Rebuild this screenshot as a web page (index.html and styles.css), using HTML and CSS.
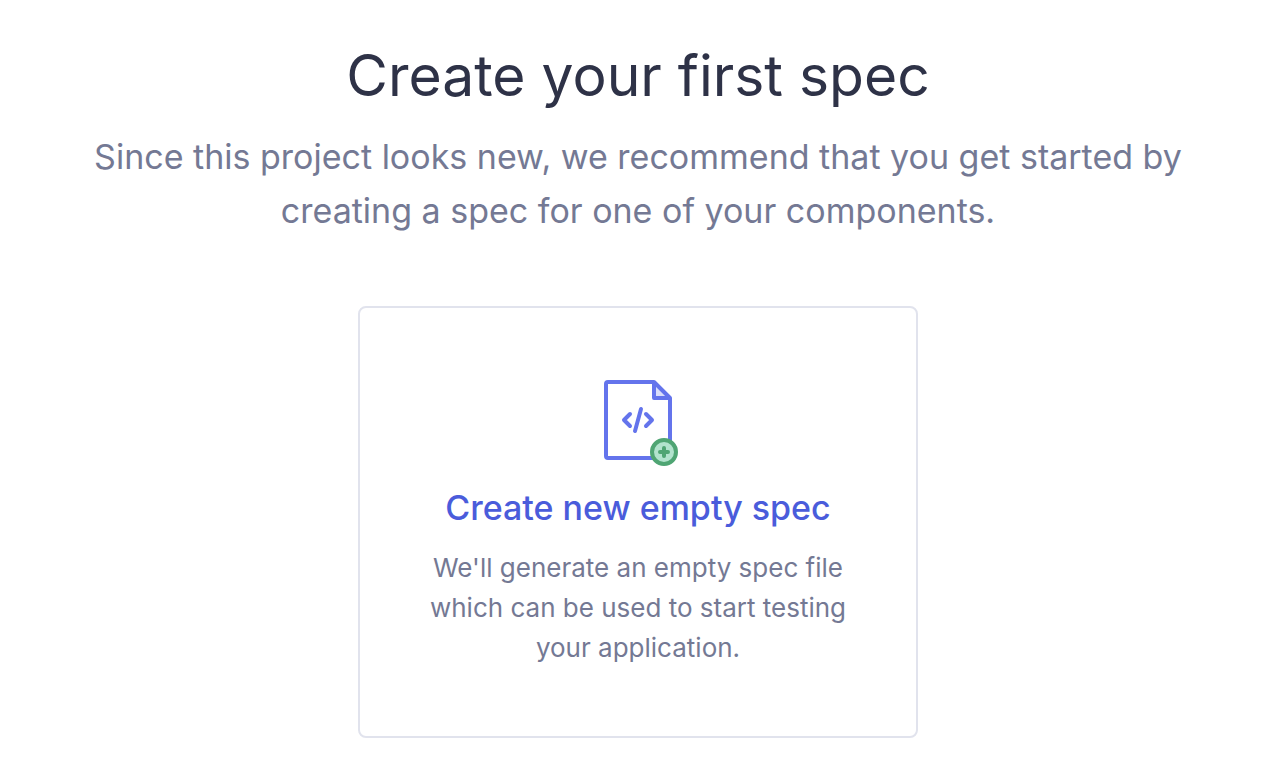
FILE: index.html
```html
<!DOCTYPE html>
<html lang="en">
<head>
<meta charset="utf-8">
<meta name="viewport" content="width=device-width, initial-scale=1">
<title>Create your first spec</title>
<link rel="stylesheet" href="styles.css">
</head>
<body>
<main class="page">
  <h1 class="title">Create your first spec</h1>
  <p class="intro">Since this project looks new, we recommend that you get started by creating a spec for one of your components.</p>
  <button class="card" type="button">
    <svg class="card-icon" viewBox="-2 0 80 88" aria-hidden="true">
      <path d="M54 4v16h16z" fill="#dadefa"/>
      <path d="M54 4H8a2 2 0 0 0-2 2v72a2 2 0 0 0 2 2h60a2 2 0 0 0 2-2V20zM54 4v16h16" fill="none" stroke="#6474ec" stroke-width="4" stroke-linejoin="round"/>
      <path d="M30 36l-6 6 6 6M46 36l6 6-6 6M41 31l-6 22" fill="none" stroke="#6474ec" stroke-width="4" stroke-linecap="round" stroke-linejoin="round"/>
      <circle cx="64" cy="74" r="12" fill="#b2e3cd" stroke="#4fa573" stroke-width="4"/>
      <path d="M64 70v8M60 74h8" stroke="#4fa573" stroke-width="4" stroke-linecap="round"/>
    </svg>
    <span class="card-title">Create new empty spec</span>
    <span class="card-text">We'll generate an empty spec file which can be used to start testing your application.</span>
  </button>
</main>
</body>
</html>
```

FILE: styles.css
```css
* {
  box-sizing: border-box;
}

body {
  margin: 0;
  background: #fff;
  font-family: Inter, "Liberation Sans", sans-serif;
}

.page {
  display: flex;
  flex-direction: column;
  align-items: center;
  padding: 40px 64px;
  text-align: center;
}

.title {
  margin: 0;
  color: #2e3247;
  font-size: 57px;
  font-weight: 400;
  line-height: 72px;
}

.intro {
  max-width: 1148px;
  margin: 18px 0 0;
  color: #747994;
  font-size: 34px;
  line-height: 54px;
}

.card {
  display: flex;
  flex-direction: column;
  align-items: center;
  width: 100%;
  max-width: 560px;
  margin-top: 68px;
  padding: 70px 60px 68px;
  border: 2px solid #e1e3ed;
  border-radius: 8px;
  background: #fff;
  font-family: inherit;
  cursor: pointer;
}

.card-icon {
  width: 80px;
  height: 88px;
}

.card-title {
  margin-top: 16px;
  color: #4a5cdb;
  font-size: 34px;
  font-weight: 500;
  line-height: 52px;
}

.card-text {
  margin-top: 14px;
  color: #747994;
  font-size: 26px;
  line-height: 40px;
}
```
